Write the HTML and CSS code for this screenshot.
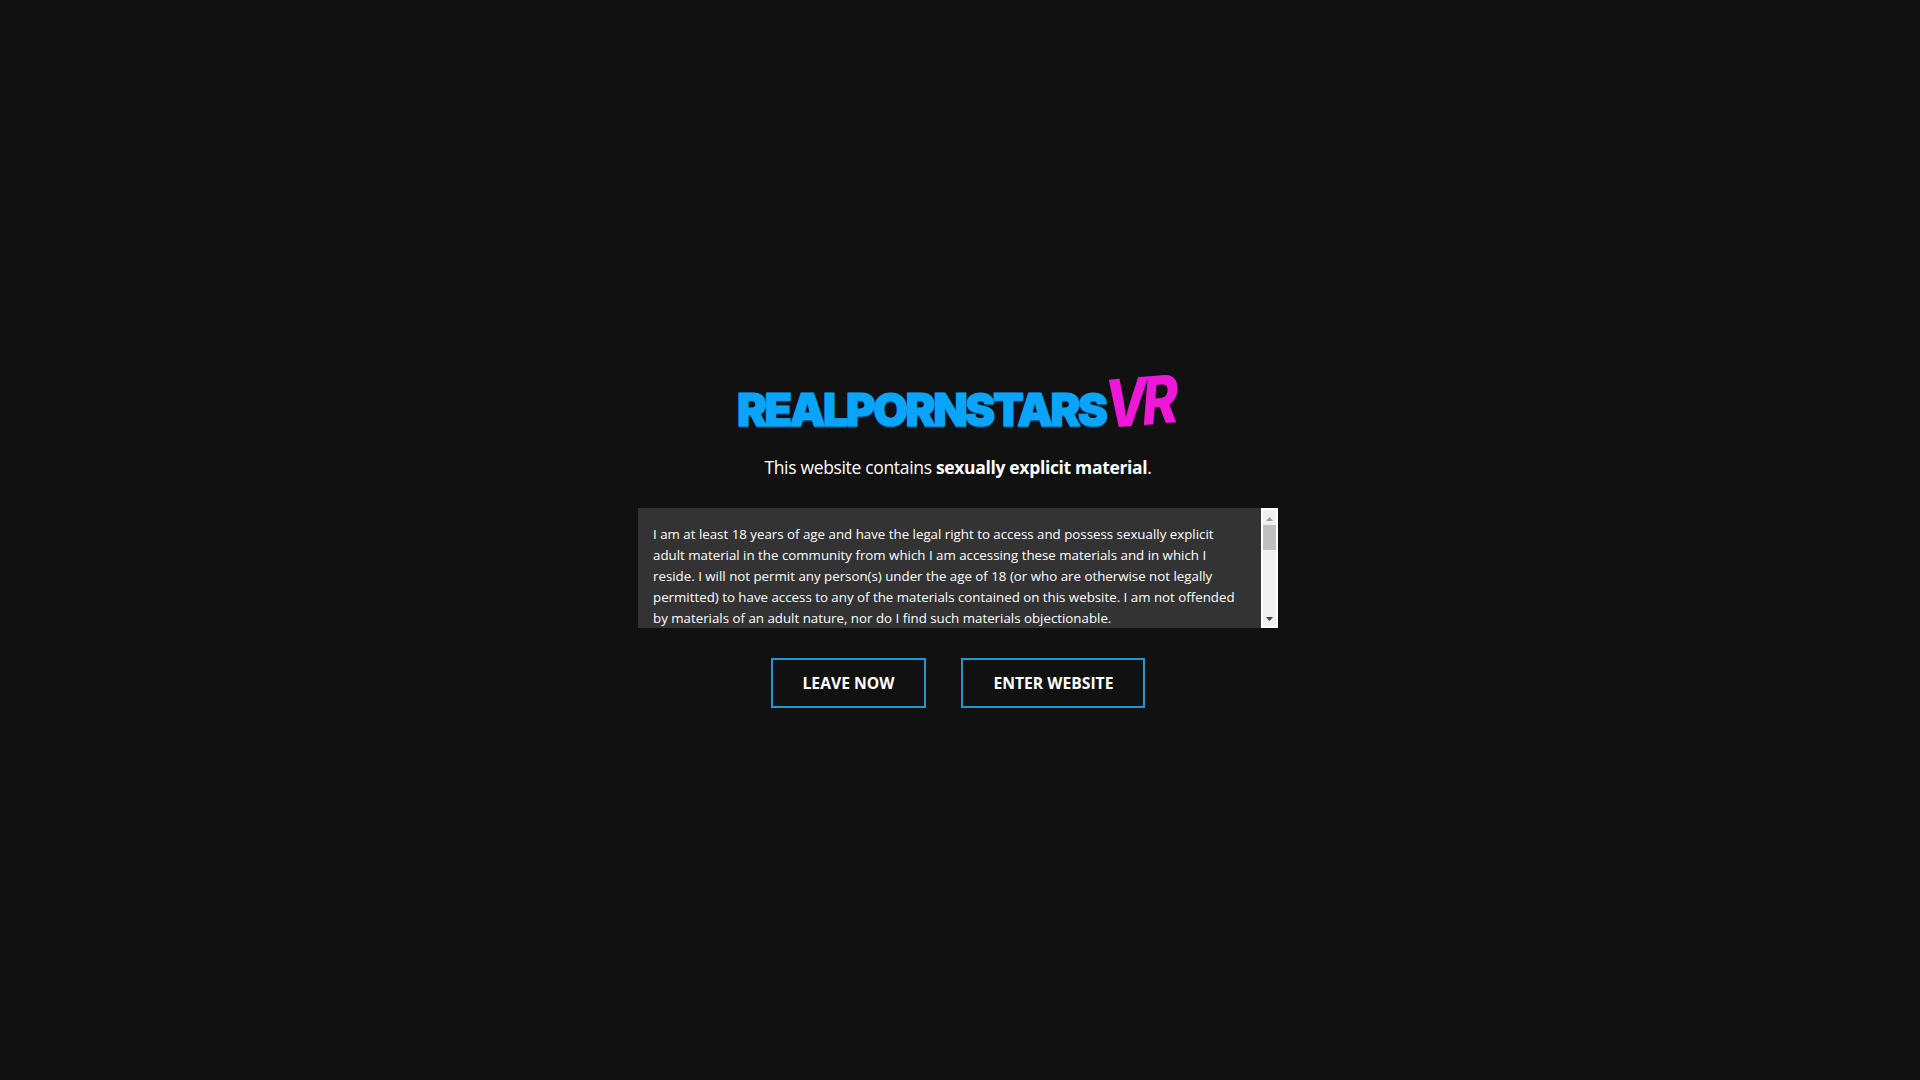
FILE: index.html
```html
<!DOCTYPE html>
<html lang="en">
<head>
<meta charset="utf-8">
<title>RealPornstarsVR</title>
<link rel="stylesheet" href="styles.css">
</head>
<body>
<main class="gate">
  <h1 class="logo"><span class="logo-main">REALPORNSTARS</span><span class="logo-vr">VR</span></h1>
  <p class="tagline">This website contains <strong>sexually explicit material</strong>.</p>
  <div class="terms">
    <div class="terms-text">
      <p>I am at least 18 years of age and have the legal right to access and possess sexually explicit adult material in the community from which I am accessing these materials and in which I reside. I will not permit any person(s) under the age of 18 (or who are otherwise not legally permitted) to have access to any of the materials contained on this website. I am not offended by materials of an adult nature, nor do I find such materials objectionable.</p>
    </div>
    <div class="scrollbar">
      <svg class="arrow" viewBox="0 0 7 4" width="7" height="4"><path d="M3.5 0 7 4H0z"/></svg>
      <div class="track"><div class="thumb"></div></div>
      <svg class="arrow arrow-down" viewBox="0 0 7 4" width="7" height="4"><path d="M0 0h7L3.5 4z"/></svg>
    </div>
  </div>
  <div class="actions">
    <a class="btn" href="#">LEAVE NOW</a>
    <a class="btn" href="#">ENTER WEBSITE</a>
  </div>
</main>
</body>
</html>
```

FILE: styles.css
```css
html, body { height: 100%; margin: 0; }
body {
  background: #111112;
  color: #fff;
  font-family: "Open Sans", "Noto Sans", sans-serif;
  display: flex;
  align-items: center;
  justify-content: center;
  padding-right: 4px;
  box-sizing: border-box;
}
.gate { width: 640px; display: flex; flex-direction: column; align-items: center; }
.logo {
  margin: 0;
  height: 66px;
  width: 442px;
  display: flex;
  align-items: flex-start;
  white-space: nowrap;
  font-weight: 900;
  line-height: 1;
}
.logo-main {
  font-family: "Inter", sans-serif;
  font-size: 45px;
  letter-spacing: -2.45px;
  color: #0aa5fa;
  -webkit-text-stroke: 1.2px #0aa5fa;
  text-shadow: 0 2px 0 #0b3f66;
  margin-top: 15px;
}
.logo-vr {
  font-family: "Inter", sans-serif;
  font-style: italic;
  font-weight: 800;
  font-size: 60px;
  letter-spacing: -6px;
  color: #ee18d8;
  margin-left: -3px;
  transform-origin: left top;
  transform: translateY(-1px) scale(0.92, 1.1) rotate(-4deg);
}
.tagline { margin: 16px 0 0; font-size: 17.5px; line-height: 26px; letter-spacing: -0.33px; }
.tagline strong { font-weight: 700; }
.terms { margin-top: 28px; width: 640px; height: 120px; display: flex; background: #333; overflow: hidden; }
.terms-text { flex: 1; padding: 16px 20px 0 15px; font-size: 13.3px; line-height: 21px; }
.terms-text p { margin: 0; }
.scrollbar {
  width: 17px;
  background: #f0f0f0;
  border: 2px solid #fff;
  box-sizing: border-box;
  display: flex;
  flex-direction: column;
  align-items: center;
  padding: 7px 0 5px;
}
.arrow { fill: #a0a0a0; flex: none; }
.arrow-down { fill: #444; }
.track { flex: 1; width: 100%; padding-top: 4px; }
.thumb { height: 25px; background: #c0c0c0; }
.actions { margin-top: 30px; display: flex; gap: 35px; }
.btn {
  display: block;
  box-sizing: border-box;
  height: 50px;
  padding: 0 30px;
  border: 2px solid #2596cf;
  color: #fff;
  text-decoration: none;
  font-weight: 700;
  font-size: 15.7px;
  line-height: 46px;
}
```
